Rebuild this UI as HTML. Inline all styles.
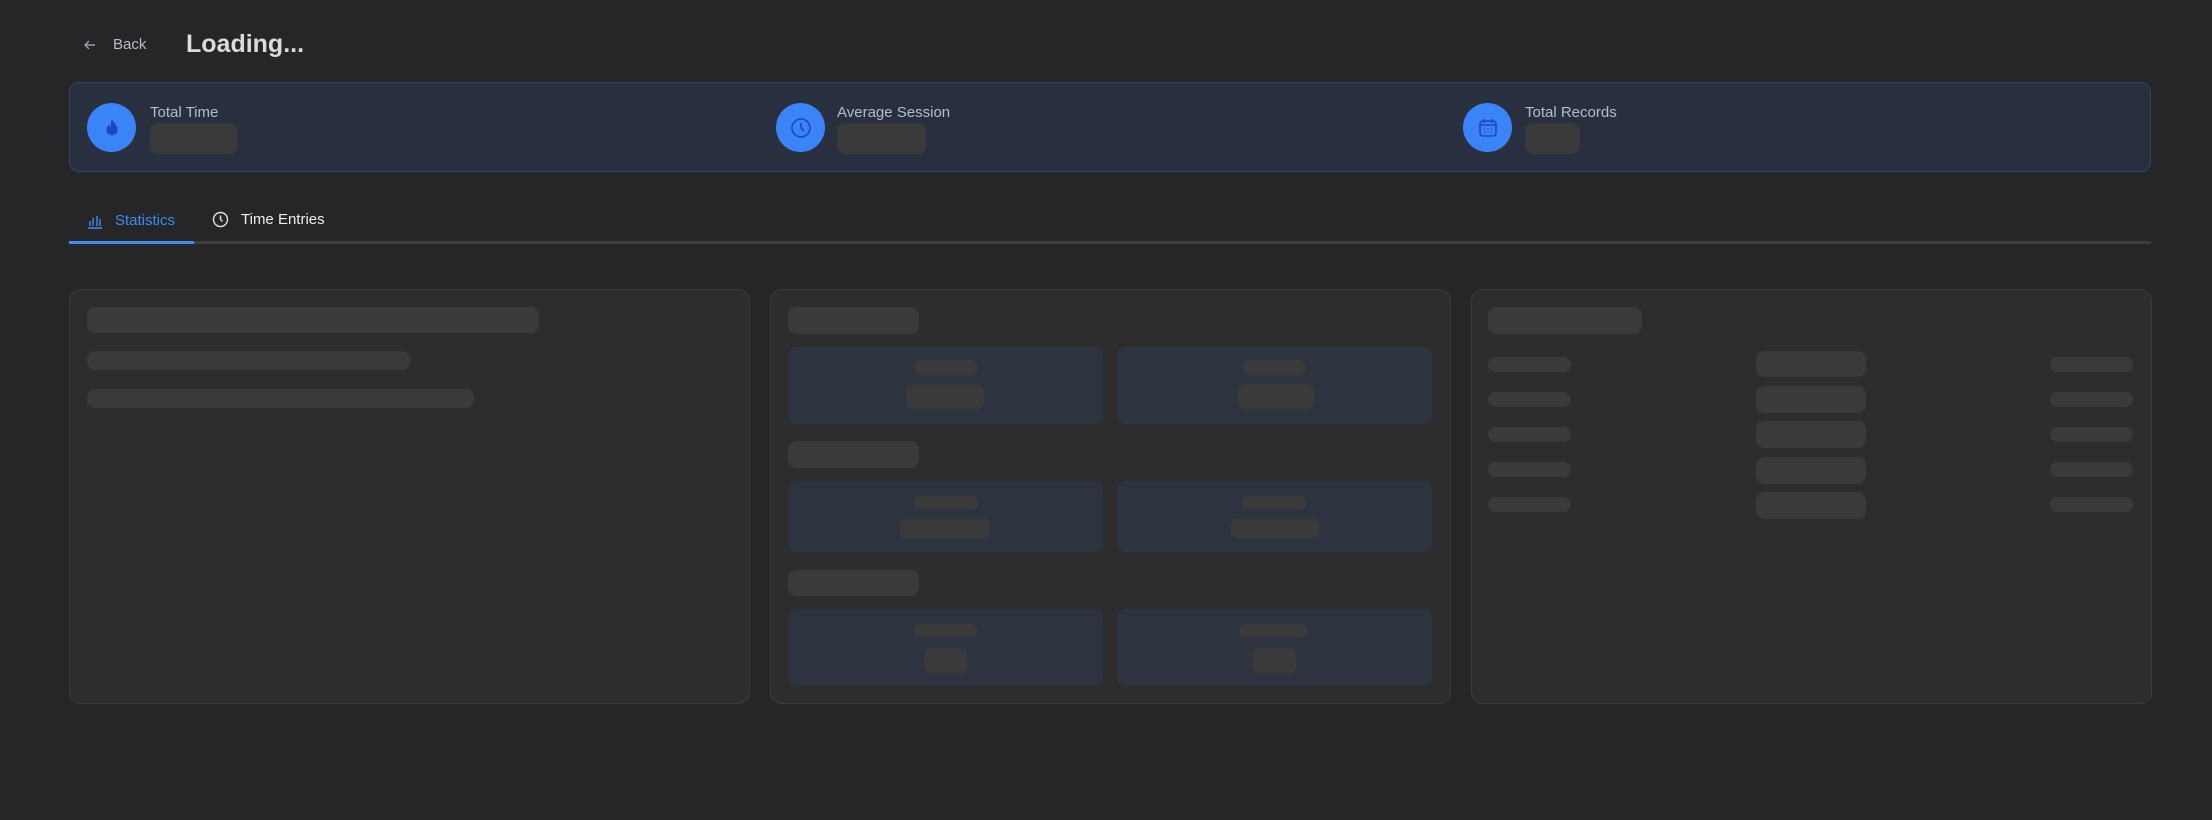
<!DOCTYPE html>
<html><head><meta charset="utf-8"><style>
*{box-sizing:border-box;margin:0;padding:0}
body{width:2212px;height:820px;background:#262628;font-family:"Liberation Sans",sans-serif;position:relative;overflow:hidden;color:#e5e5e5}
.a{position:absolute}
.sk{position:absolute;background:#3a3a3a;border-radius:8px}
.card{position:absolute;top:289px;height:415px;width:681px;background:#2d2d2d;border:1px solid #3c3c3c;border-radius:12px}
.bb{position:absolute;background:#2d3440;border-radius:8px}
.ic{position:absolute;width:49px;height:49px;border-radius:50%;background:#3b84f8;top:103px;display:flex;align-items:center;justify-content:center}
.lbl{position:absolute;top:104px;font-size:15px;color:#b8bcc6}
</style></head><body>
<svg class="a" style="left:82px;top:37px" width="16" height="16" viewBox="0 0 16 16" fill="none" stroke="#9aa0a8" stroke-width="1.4"><path d="M13 8H3M7 4L3 8l4 4"/></svg>
<div class="a" style="left:113px;top:36px;font-size:15px;color:#b8bcc4">Back</div>
<div class="a" style="left:186px;top:30px;font-size:25px;font-weight:bold;color:#dcdcdc">Loading...</div>

<div class="a" style="left:69px;top:82px;width:2082px;height:90px;background:#283040;border:1px solid #30466a;border-radius:10px"></div>
<div class="ic" style="left:87px"><svg width="22" height="22" viewBox="0 0 24 24"><path fill="#1e47b8" d="M12 2c1 4 6 6 6 12a6 6 0 0 1-12 0c0-3 2-5 3-6 0 2 1 3 2 3-1-3 0-6 1-9z"/></svg></div>
<div class="lbl" style="left:150px">Total Time</div>
<div class="sk" style="left:150px;top:123px;width:87px;height:31px"></div>
<div class="ic" style="left:776px"><svg width="24" height="24" viewBox="0 0 24 24" fill="none" stroke="#1e47b8" stroke-width="1.6"><circle cx="12" cy="12" r="9"/><path d="M12 7v5l3 3"/></svg></div>
<div class="lbl" style="left:837px">Average Session</div>
<div class="sk" style="left:837px;top:123px;width:89px;height:31px"></div>
<div class="ic" style="left:1463px"><svg width="24" height="24" viewBox="0 0 24 24" fill="none" stroke="#1e47b8" stroke-width="1.6"><rect x="4" y="5" width="16" height="15" rx="3"/><path d="M4 9h16M8 3v4M16 3v4"/><path d="M8 13h1M11.5 13h1M15 13h1M8 16h1M11.5 16h1M15 16h1"/></svg></div>
<div class="lbl" style="left:1525px">Total Records</div>
<div class="sk" style="left:1525px;top:123px;width:55px;height:31px"></div>

<svg class="a" style="left:87px;top:212px" width="16" height="17" viewBox="0 0 16 17" fill="none" stroke="#3b8ef0" stroke-width="1.4"><path d="M1 16h14M3 14V9M6 14V6M10 14V4M13 14V7"/></svg>
<div class="a" style="left:115px;top:212px;font-size:15px;color:#3b8ef0">Statistics</div>
<svg class="a" style="left:212px;top:211px" width="17" height="17" viewBox="0 0 17 17" fill="none" stroke="#e0e0e0" stroke-width="1.4"><circle cx="8.5" cy="8.5" r="7"/><path d="M8.5 4.5v4l2 2"/></svg>
<div class="a" style="left:241px;top:211px;font-size:15px;color:#eee">Time Entries</div>
<div class="a" style="left:69px;top:241px;width:2082px;height:3px;background:#3e3e3e"></div>
<div class="a" style="left:69px;top:241px;width:125px;height:3px;background:#3b8ef0"></div>

<div class="card" style="left:69px"></div>
<div class="sk" style="left:87px;top:307px;width:452px;height:26px"></div>
<div class="sk" style="left:87px;top:351px;width:323px;height:19px"></div>
<div class="sk" style="left:87px;top:389px;width:387px;height:19px"></div>

<div class="card" style="left:770px"></div>
<div class="sk" style="left:788px;top:307px;width:131px;height:27px"></div>
<div class="bb" style="left:788px;top:347px;width:315px;height:77px"></div>
<div class="bb" style="left:1117px;top:347px;width:315px;height:77px"></div>
<div class="sk" style="left:915px;top:360px;width:62px;height:15px;border-radius:5px"></div>
<div class="sk" style="left:906px;top:385px;width:78px;height:24px"></div>
<div class="sk" style="left:1243px;top:360px;width:62px;height:15px;border-radius:5px"></div>
<div class="sk" style="left:1238px;top:384px;width:76px;height:25px"></div>
<div class="sk" style="left:788px;top:441px;width:131px;height:27px"></div>
<div class="bb" style="left:788px;top:481px;width:315px;height:71px"></div>
<div class="bb" style="left:1117px;top:481px;width:315px;height:71px"></div>
<div class="sk" style="left:914px;top:496px;width:64px;height:13px;border-radius:5px"></div>
<div class="sk" style="left:900px;top:519px;width:90px;height:19px;border-radius:5px"></div>
<div class="sk" style="left:1242px;top:496px;width:64px;height:13px;border-radius:5px"></div>
<div class="sk" style="left:1231px;top:519px;width:88px;height:19px;border-radius:5px"></div>
<div class="sk" style="left:788px;top:570px;width:131px;height:26px"></div>
<div class="bb" style="left:788px;top:609px;width:315px;height:77px"></div>
<div class="bb" style="left:1117px;top:609px;width:315px;height:77px"></div>
<div class="sk" style="left:914px;top:624px;width:63px;height:13px;border-radius:5px"></div>
<div class="sk" style="left:924px;top:648px;width:43px;height:25px;border-radius:6px"></div>
<div class="sk" style="left:1240px;top:624px;width:67px;height:13px;border-radius:5px"></div>
<div class="sk" style="left:1253px;top:648px;width:43px;height:25px;border-radius:6px"></div>

<div class="card" style="left:1471px"></div>
<div class="sk" style="left:1488px;top:307px;width:154px;height:27px"></div>
<div class="sk" style="left:1488px;top:357px;width:83px;height:15px"></div>
<div class="sk" style="left:1488px;top:392px;width:83px;height:15px"></div>
<div class="sk" style="left:1488px;top:427px;width:83px;height:15px"></div>
<div class="sk" style="left:1488px;top:462px;width:83px;height:15px"></div>
<div class="sk" style="left:1488px;top:497px;width:83px;height:15px"></div>
<div class="sk" style="left:1756px;top:351px;width:110px;height:26px"></div>
<div class="sk" style="left:1756px;top:386px;width:110px;height:27px"></div>
<div class="sk" style="left:1756px;top:421px;width:110px;height:27px"></div>
<div class="sk" style="left:1756px;top:457px;width:110px;height:27px"></div>
<div class="sk" style="left:1756px;top:492px;width:110px;height:27px"></div>
<div class="sk" style="left:2050px;top:357px;width:83px;height:15px"></div>
<div class="sk" style="left:2050px;top:392px;width:83px;height:15px"></div>
<div class="sk" style="left:2050px;top:427px;width:83px;height:15px"></div>
<div class="sk" style="left:2050px;top:462px;width:83px;height:15px"></div>
<div class="sk" style="left:2050px;top:497px;width:83px;height:15px"></div>
</body></html>
